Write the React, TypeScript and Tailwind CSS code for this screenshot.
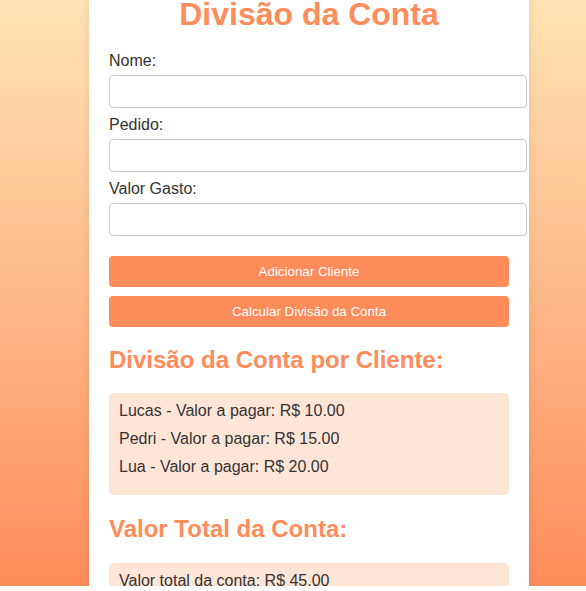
const clientes = [
  { nome: "Lucas", valor: 10 },
  { nome: "Pedri", valor: 15 },
  { nome: "Lua", valor: 20 },
];

const campos = ["Nome:", "Pedido:", "Valor Gasto:"];

export default function App() {
  const total = clientes.reduce((soma, c) => soma + c.valor, 0);

  return (
    <div className="h-[586px] flex justify-center pl-[32px] bg-gradient-to-b from-[#ffe4b5] to-[#ff8c5a] font-['Liberation_Sans',Arial,sans-serif] text-[#333]">
      <div className="w-[440px] shrink-0 h-fit -mt-[47px] p-[20px] bg-white rounded-lg shadow-[0_0_10px_rgba(0,0,0,0.1)]">
        <h1 className="mt-[23px] mb-[19px] text-center text-[32px] leading-[37px] font-bold text-[#ff8c5a]">
          Divisão da Conta
        </h1>

        {campos.map((campo) => (
          <div key={campo}>
            <label className="block mb-[5px] text-[16px] leading-[18px]">{campo}</label>
            <input
              type="text"
              className="block w-[418px] h-[33px] mb-[8px] px-[8px] text-[13px] border border-[#ccc] rounded-[4px] outline-none"
            />
          </div>
        ))}

        <button className="block w-full h-[31px] mt-[20px] text-[13.33px] text-white bg-[#ff8c5a] rounded-[4px]">
          Adicionar Cliente
        </button>
        <button className="block w-full h-[31px] mt-[9px] text-[13.33px] text-white bg-[#ff8c5a] rounded-[4px]">
          Calcular Divisão da Conta
        </button>

        <h2 className="mt-[19px] mb-[19px] text-[24px] leading-[28px] font-bold text-[#ff8c5a]">
          Divisão da Conta por Cliente:
        </h2>
        <div className="p-[9px] pl-[10px] bg-[#ffe5d6] rounded-[5px]">
          {clientes.map((c) => (
            <div key={c.nome} className="mb-[9.5px] text-[16px] leading-[18.4px]">
              {c.nome} - Valor a pagar: R$ {c.valor.toFixed(2)}
            </div>
          ))}
        </div>

        <h2 className="mt-[20px] mb-[20px] text-[24px] leading-[28px] font-bold text-[#ff8c5a]">
          Valor Total da Conta:
        </h2>
        <div className="p-[9px] pl-[10px] bg-[#ffe5d6] rounded-[5px]">
          <div className="text-[16px] leading-[18.4px]">Valor total da conta: R$ {total.toFixed(2)}</div>
        </div>
      </div>
    </div>
  );
}
